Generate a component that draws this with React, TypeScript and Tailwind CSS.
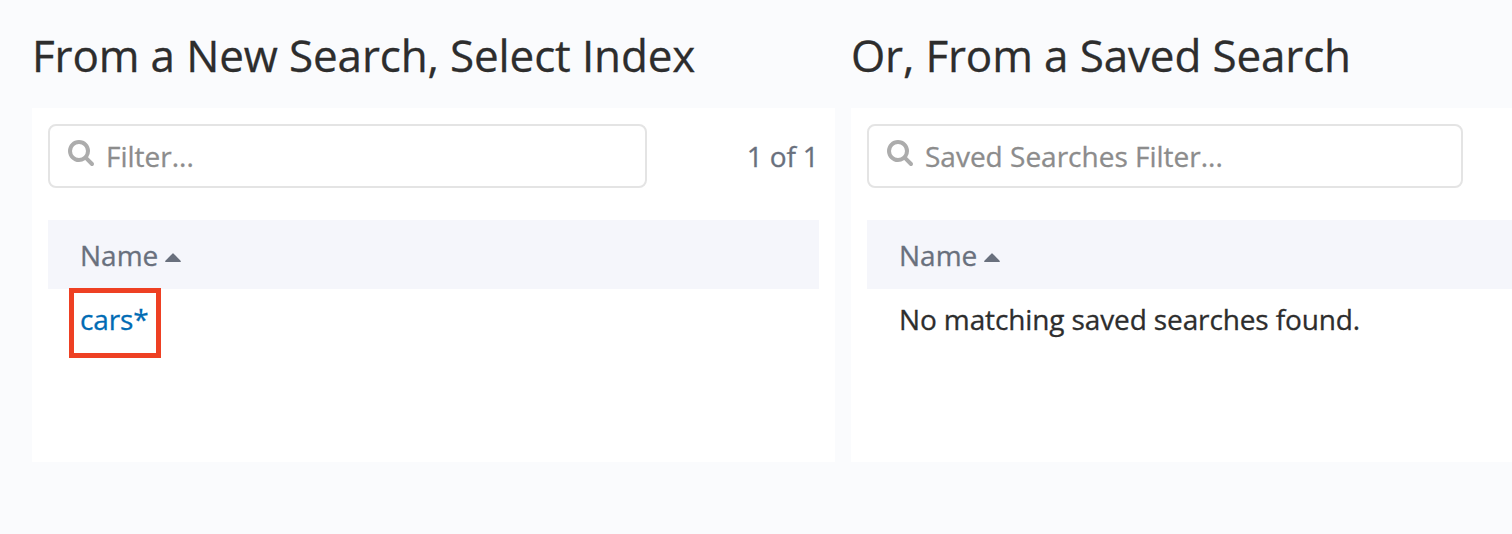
import React from 'react';

function SearchIcon() {
  return (
    <svg className="mt-[14px] ml-[17.500px] h-[26px] w-[26px] shrink-0 text-[#acacac]" viewBox="0 0 1664 1664" fill="currentColor">
      <path d="M1152 704q0-185-131.500-316.500T704 256 387.500 387.500 256 704t131.500 316.500T704 1152t316.500-131.500T1152 704zm512 832q0 52-38 90t-90 38q-54 0-90-38l-343-342q-179 124-399 124-143 0-273.500-55.500t-225-150-150-225T0 704t55.500-273.500 150-225 225-150T704 0t273.500 55.500 225 150 150 225T1408 704q0 220-124 399l343 343q37 37 37 90z" />
    </svg>
  );
}

function FilterBox({ label, width }: { label: string; width: string }) {
  return (
    <div className={`flex h-16 shrink-0 rounded-[8px] border-2 border-[#e4e4e4] bg-white ${width}`}>
      <SearchIcon />
      <span className="ml-[12.500px] mt-[11px] text-[28px] leading-[38px] text-[#8c8c8c]">{label}</span>
    </div>
  );
}

function TableHeader() {
  return (
    <div className="mt-8 flex h-[69px] items-start bg-[#f5f6fb] pl-8 pt-4 text-[28px] leading-[38px] text-[#69707d]">
      <span>Name</span>
      <svg className="mt-[17px] ml-[7px] h-[9px] w-[16px]" viewBox="0 0 16 9" fill="currentColor">
        <path d="M1 9Q-.3 9 .4 7.700L7.300.7Q8 0 8.700.7L15.600 7.700Q16.300 9 15 9Z" />
      </svg>
    </div>
  );
}

export default function App() {
  return (
    <main className="flex h-[534px] w-[1512px] gap-4 overflow-hidden bg-[#fafbfd] pl-8 font-['Open_Sans',sans-serif] [-webkit-text-stroke:0.3px]">
      <section className="w-[803px] shrink-0">
        <h2 className="h-[108px] whitespace-nowrap pt-6 text-[44px] leading-[62px] tracking-[-0.14px] text-[#2d2d2d]">From a New Search, Select Index</h2>
        <div className="h-[354px] bg-white p-4">
          <div className="flex justify-between">
            <FilterBox label="Filter..." width="w-[599px]" />
            <span className="mt-[13px] mr-[0.500px] text-[28px] leading-[38px] tracking-[-0.2px] text-[#69707d]">1 of 1</span>
          </div>
          <TableHeader />
          <div className="-mt-px ml-[21px] h-[70px] w-[92px] border-[5px] border-[#ee4023] pl-[6px] pt-[7px]">
            <a href="#" className="text-[28px] leading-[38px] tracking-[-0.12px] text-[#006bb4]">cars*</a>
          </div>
        </div>
      </section>
      <section className="w-[803px] shrink-0">
        <h2 className="h-[108px] whitespace-nowrap pt-6 text-[44px] leading-[62px] tracking-[-0.14px] text-[#2d2d2d]">Or, From a Saved Search</h2>
        <div className="h-[354px] bg-white p-4">
          <FilterBox label="Saved Searches Filter..." width="w-[596px]" />
          <TableHeader />
          <p className="mt-[11px] pl-8 text-[28px] leading-[38px] tracking-[-0.12px] text-[#2d2d2d]">No matching saved searches found.</p>
        </div>
      </section>
    </main>
  );
}
